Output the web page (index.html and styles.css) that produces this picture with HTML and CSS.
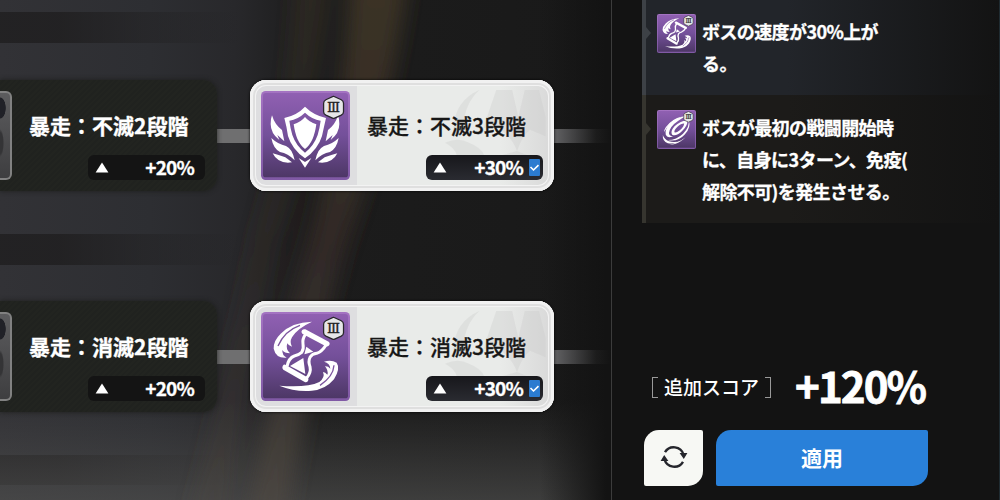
FILE: index.html
```
<!DOCTYPE html>
<html lang="ja">
<head>
    <meta charset="UTF-8">
    <meta name="viewport" content="width=device-width, initial-scale=1.0">
    <title>暴走</title>
    <link rel="stylesheet" href="styles.css">
</head>
<body>
    <svg class="defs" width="0" height="0">
        <defs>
            <linearGradient id="purple" x1="0" y1="0" x2="0" y2="1">
                <stop offset="0" stop-color="#9060b2"/>
                <stop offset="0.5" stop-color="#74509a"/>
                <stop offset="1" stop-color="#4d3766"/>
            </linearGradient>
            <linearGradient id="edge" x1="0" y1="0" x2="0" y2="1">
                <stop offset="0" stop-color="#a473c2"/>
                <stop offset="1" stop-color="#8059a5"/>
            </linearGradient>
        </defs>

        <symbol id="tile" viewBox="0 0 267 267">
            <rect width="267" height="267" rx="14" fill="url(#edge)"/>
            <rect x="6" y="6" width="255" height="253" rx="8" fill="url(#purple)"/>
        </symbol>

        <symbol id="wing" viewBox="0 0 330 330" overflow="visible">
            <path d="M66 106Q74 134 96 150L103 184L82 165L88 180Q62 160 62 132Q62 116 66 106Z"/>
            <path d="M64 174Q84 193 108 198Q127 206 134 241Q114 220 90 216Q70 206 64 174Z"/>
            <path d="M68 220Q90 226 106 232L126 247Q84 253 68 220Z"/>
        </symbol>

        <symbol id="shield" viewBox="33 33 267 267">
            <g fill="#fff">
                <path fill-rule="evenodd" d="M165 80Q190 105 228 114Q222 140 216 168Q204 208 165 235Q126 208 114 168Q110 140 103 114Q142 105 165 80ZM165 98Q144 118 118 122Q121 145 127 165Q138 197 165 218Q192 197 203 165Q209 145 212 122Q186 118 165 98Z"/>
                <path d="M165 111Q178 127 199 133Q195 160 188 176Q179 196 165 207Q151 196 142 176Q135 160 131 133Q152 127 165 111Z"/>
                <use href="#wing" width="330" height="330"/>
                <use href="#wing" width="330" height="330" transform="translate(330) scale(-1 1)"/>
                <path d="M146 234L165 246L184 234L165 263Z"/>
            </g>
        </symbol>

        <symbol id="hourglass" viewBox="33 36 267 267">
            <g fill="#fff">
                <path d="M186 65Q126 66 92 101Q70 122 71 146Q78 176 110 173Q96 166 97 150Q103 160 120 160Q106 147 112 130Q116 138 126 140Q118 126 126 112Q140 86 186 65Z"/>
                <path d="M88 257Q135 276 185 272Q225 270 252 238Q272 205 260 188Q244 178 222 185Q240 190 241 206Q234 198 225 199Q236 212 232 224Q226 216 219 216Q226 232 208 246Q170 264 88 257Z"/>
                <path d="M166 88L236 125Q242 130 236 137Q232 141 226 138L157 101Q152 97 156 91Q160 86 166 88Z"/>
                <path d="M106 194L172 232Q178 237 174 243Q170 248 164 246L100 209Q95 204 98 198Q101 193 106 194Z"/>
                <path d="M169 140L190 155L163 163Z"/>
                <path d="M160 174L166 222L120 198Z"/>
            </g>
            <!-- gaps between the strands of wind -->
            <path d="M150 76Q104 92 84 138M252 196Q250 230 210 256" fill="none" stroke="#7d559f" stroke-width="4"/>
            <path d="M168 101Q156 117 159 132Q162 147 155 157Q146 165 133 168Q116 174 111 199M228 135Q216 155 200 160Q186 162 180 172Q174 184 180 200Q184 218 170 234" fill="none" stroke="#fff" stroke-width="9" stroke-linejoin="round"/>
        </symbol>

        <symbol id="swirl" viewBox="0 0 267 267">
            <g fill="#fff">
                <path d="M222 36Q140 44 88 92Q52 130 60 170Q70 196 110 180Q84 180 82 158Q88 112 146 74Q176 50 222 36Z"/>
                <path d="M216 66Q226 112 178 162Q134 204 74 206Q140 222 190 168Q236 118 216 66Z"/>
                <path fill-rule="evenodd" d="M206 74Q160 72 120 112Q88 150 104 170Q130 184 172 144Q214 104 206 74ZM186 92Q186 112 156 138Q128 160 120 152Q114 138 140 114Q168 90 186 92Z"/>
                <path d="M40 172Q36 214 74 228Q120 236 168 212Q116 224 82 214Q50 204 40 172Z"/>
                <path d="M172 44Q100 60 60 118Q48 136 50 150Q76 90 172 44Z"/>
                <path d="M84 238Q150 234 196 186Q150 222 84 238Z"/>
            </g>
        </symbol>

        <symbol id="rank" viewBox="0 0 72 76">
            <path d="M36 3L60 14Q67 18 67 25V51Q67 58 60 62L36 73L12 62Q5 58 5 51V25Q5 18 12 14Z" fill="#e6e6e8" stroke="#29272c" stroke-width="4"/>
        </symbol>

        <symbol id="emblem" viewBox="0 0 336 336">
            <path d="M106 28Q30 60 25 150L56 142Q60 70 106 28ZM158 28L207 28L226 110L246 28H290L310 110V170L262 150Q236 172 222 216Q208 176 170 148Q142 138 118 146Q136 92 158 28ZM0 190Q40 172 74 190Q112 205 120 228H36Q30 205 0 190ZM222 216L252 228H178Z"/>
        </symbol>

        <symbol id="up" viewBox="0 0 14 11">
            <path d="M7 0.5L13.4 10.5H0.6Z"/>
        </symbol>
    </svg>

    <main class="board">
        <svg class="backdrop" viewBox="0 0 611 500">
            <defs>
                <filter id="soft" x="-50%" width="200%"><feGaussianBlur stdDeviation="10"/></filter>
                <linearGradient id="gold" x1="0" y1="0" x2="0" y2="1">
                    <stop offset="0" stop-color="#4a3e26"/>
                    <stop offset="0.5" stop-color="#3a2f2b"/>
                    <stop offset="1" stop-color="#524c44"/>
                </linearGradient>
            </defs>
            <g filter="url(#soft)" fill="url(#gold)">
                <path d="M350 -20H408Q390 110 355 220Q320 320 285 520H248Q270 380 310 235Q344 120 350 -20Z" opacity="0.7"/>
                <path d="M295 -20H330Q315 130 275 240Q245 380 225 520H190Q225 380 255 230Q290 120 295 -20Z" opacity="0.35"/>
            </g>
        </svg>

        <div class="tree">
            <div class="branch">
                <div class="card locked">
                    <div class="icon dim"></div>
                    <div class="info">
                        <div class="name">暴走：不滅2段階</div>
                        <div class="score"><svg class="up"><use href="#up"/></svg><span>+20%</span></div>
                    </div>
                </div>
                <div class="link"></div>
                <div class="card active">
                    <svg class="emblem"><use href="#emblem"/></svg>
                    <div class="icon">
                        <svg class="art"><use href="#tile"/><use href="#shield"/></svg>
                        <svg class="rank" viewBox="0 0 72 76">
                            <use href="#rank"/>
                            <text class="numeral" x="36" y="53" text-anchor="middle">Ⅲ</text>
                        </svg>
                    </div>
                    <div class="info">
                        <div class="name">暴走：不滅3段階</div>
                        <div class="score">
                            <svg class="up"><use href="#up"/></svg><span>+30%</span>
                            <svg class="check" viewBox="0 0 11 17"><path d="M1.5 8L4.5 11L9.5 6.2"/></svg>
                        </div>
                    </div>
                </div>
                <div class="link tail"></div>
            </div>

            <div class="branch">
                <div class="card locked">
                    <div class="icon dim"></div>
                    <div class="info">
                        <div class="name">暴走：消滅2段階</div>
                        <div class="score"><svg class="up"><use href="#up"/></svg><span>+20%</span></div>
                    </div>
                </div>
                <div class="link"></div>
                <div class="card active">
                    <svg class="emblem"><use href="#emblem"/></svg>
                    <div class="icon">
                        <svg class="art"><use href="#tile"/><use href="#hourglass"/></svg>
                        <svg class="rank" viewBox="0 0 72 76">
                            <use href="#rank"/>
                            <text class="numeral" x="36" y="53" text-anchor="middle">Ⅲ</text>
                        </svg>
                    </div>
                    <div class="info">
                        <div class="name">暴走：消滅3段階</div>
                        <div class="score">
                            <svg class="up"><use href="#up"/></svg><span>+30%</span>
                            <svg class="check" viewBox="0 0 11 17"><path d="M1.5 8L4.5 11L9.5 6.2"/></svg>
                        </div>
                    </div>
                </div>
                <div class="link tail"></div>
            </div>
        </div>
    </main>

    <aside class="panel">
        <div class="effects">
            <div class="effect blue">
                <div class="icon small">
                    <svg class="art"><use href="#tile"/><use href="#hourglass"/></svg>
                    <svg class="rank" viewBox="0 0 72 76">
                        <use href="#rank"/>
                        <text class="numeral" x="36" y="53" text-anchor="middle">Ⅲ</text>
                    </svg>
                </div>
                <p>ボスの速度が30%上が<br>る。</p>
            </div>
            <div class="effect olive">
                <div class="icon small">
                    <svg class="art"><use href="#tile"/><use href="#swirl"/></svg>
                    <svg class="rank" viewBox="0 0 72 76">
                        <use href="#rank"/>
                        <text class="numeral" x="36" y="53" text-anchor="middle">Ⅲ</text>
                    </svg>
                </div>
                <p>ボスが最初の戦闘開始時<br>に、自身に3ターン、免疫(<br>解除不可)を発生させる。</p>
            </div>
        </div>

        <div class="total">
            <div class="total-label">追加スコア</div>
            <div class="total-value">+120%</div>
        </div>

        <div class="actions">
            <button class="reset" type="button" aria-label="リセット">
                <svg viewBox="0 0 28 24">
                    <path class="arc" d="M5 7.2A10.2 10.2 0 0 1 23.5 9.6M23 16.8A10.2 10.2 0 0 1 4.5 14.4"/>
                    <path d="M19.6 8H27.4L23.8 14ZM8.4 16H0.6L4.2 10Z"/>
                </svg>
            </button>
            <button class="apply" type="button">適用</button>
        </div>
    </aside>
</body>
</html>
```
FILE: styles.css
```
* {
    box-sizing: border-box;
}

body {
    display: flex;
    width: 1000px;
    height: 500px;
    margin: 0;
    overflow: hidden;
    background: #131313;
    color: #fff;
    font-family: "Noto Sans CJK JP", "Noto Sans", sans-serif;
}

.defs {
    position: absolute;
}

/* left side: skill tree */
.board {
    display: grid;
    width: 611px;
    height: 500px;
    overflow: hidden;
    background:
        linear-gradient(90deg, rgba(19, 19, 19, 0) 540px, #131313 606px),
        linear-gradient(180deg, rgba(80, 80, 80, 0) 400px, rgba(80, 80, 79, 0.65) 500px),
        linear-gradient(90deg, rgba(31, 30, 31, 0.8) 60px, rgba(31, 30, 31, 0) 240px) 0 12px / 240px 31px no-repeat,
        linear-gradient(90deg, rgba(31, 30, 31, 0.8) 60px, rgba(31, 30, 31, 0) 240px) 0 234px / 240px 31px no-repeat,
        linear-gradient(90deg, rgba(31, 30, 31, 0.8) 60px, rgba(31, 30, 31, 0) 240px) 0 455px / 240px 30px no-repeat,
        linear-gradient(90deg, #323236 0, #2d2e32 150px, #28282b 235px, #1c1c1c 310px, #191919 100%);
}

.backdrop,
.tree {
    grid-area: 1 / 1;
}

.backdrop {
    width: 611px;
    height: 500px;
}

.tree {
    display: flex;
    flex-direction: column;
    gap: 110px;
    padding-top: 80px;
    z-index: 1;
}

.branch {
    display: flex;
    align-items: center;
    height: 111px;
}

.card {
    position: relative;
    display: flex;
    flex: none;
    height: 111px;
}

.locked {
    width: 217px;
    padding: 11px 12px 0 0;
    border-radius: 0 14px 14px 0;
    background: repeating-linear-gradient(135deg, #222420 0 2px, #20221f 2px 4px);
    box-shadow: 0 0 5px rgba(24, 25, 23, 0.8);
}

.active {
    width: 304px;
    padding: 11px 11px 0 11px;
    border-radius: 16px;
    background: linear-gradient(90deg, #dedee0 107px, #e9ebe9 107px, #e9ebe9 250px, #d8d8d8 100%);
    box-shadow: inset 0 0 0 3px #f1f1f1, inset 0 0 0 5px #dfdfdf, inset 0 0 0 6px #f3f3f3, 0 0 3px #000;
}

.emblem {
    position: absolute;
    top: 0;
    left: 195px;
    width: 109px;
    height: 111px;
    fill: rgba(198, 199, 200, 0.3);
}

.icon {
    position: relative;
    flex: none;
    width: 89px;
    height: 89px;
}

.art {
    display: block;
    width: 100%;
    height: 100%;
}

.rank {
    position: absolute;
    top: 4%;
    right: 6%;
    width: 26%;
    height: 28%;
}

.numeral {
    font: 42px "DejaVu Serif", serif;
    fill: #222;
    stroke: #222;
    stroke-width: 1px;
}

/* only the right edge of this tile is on screen */
.dim {
    width: 12px;
    border: 2px solid #818181;
    border-left: 0;
    border-radius: 0 6px 6px 0;
    background:
        radial-gradient(ellipse 4px 14px at 0 50px, #343436 75%, transparent),
        radial-gradient(ellipse 6px 11px at 0 15px, #202127 90%, transparent),
        linear-gradient(#5c5c5e, #3e3e40);
}

.info {
    position: relative;
    display: flex;
    flex: 1;
    flex-direction: column;
    align-items: flex-end;
}

.name {
    width: 100%;
    height: 64px;
    padding: 8px 0 0 17px;
    font-size: 21px;
    font-weight: 700;
    line-height: 52px;
    white-space: nowrap;
    -webkit-text-stroke: 0.3px;
}

.active .name {
    color: #171717;
    font-weight: 500;
}

.score {
    display: flex;
    align-items: center;
    width: 117px;
    height: 25px;
    padding: 0 11px 0 7px;
    border-radius: 6px;
    background: #141414;
    font-size: 19px;
    font-weight: 700;
    line-height: 25px;
    letter-spacing: -0.8px;
    -webkit-text-stroke: 0.3px;
}

.score span {
    margin: -2px 0 0 auto;
}

.active .score {
    padding-right: 3px;
    background: linear-gradient(#17171b, #2a2b31);
}

.up {
    width: 14px;
    height: 11px;
    fill: #fff;
}

.check {
    width: 11px;
    height: 17px;
    margin-left: 6px;
    border-radius: 1px;
    background: #2b7bd0;
    fill: none;
    stroke: #fff;
    stroke-width: 1.6;
}

.link {
    width: 33px;
    height: 14px;
    background: #6f6f70;
}

.tail {
    width: 57px;
    background: linear-gradient(90deg, #626264, rgba(40, 40, 40, 0.4) 42px, transparent);
}

/* right side: effects and total */
.panel {
    width: 389px;
    height: 500px;
    padding-left: 30px;
    border-left: 1px solid #3c3c3c;
    border-right: 1px solid #1f2b31;
    background: #131313;
}

.effects {
    height: 223px;
}

.effect {
    position: relative;
    display: flex;
    gap: 6px;
    padding: 14px 0 0 11px;
    border-left: 4px solid;
}

/* small pointer beside the icon */
.effect::before {
    content: "";
    position: absolute;
    left: 0;
    border: 6px solid transparent;
    border-left: 5px solid;
    border-left-color: inherit;
    border-right: 0;
}

.blue {
    height: 95px;
    border-color: #3d4146;
    background: linear-gradient(90deg, #22252a 40%, #131313 100%);
}

.blue::before {
    top: 27px;
}

.olive {
    height: 128px;
    padding-top: 15px;
    border-color: #36352f;
    background: linear-gradient(90deg, #1c1b19 40%, #131313 100%);
}

.olive::before {
    top: 28px;
}

.small {
    width: 39px;
    height: 39px;
}

.small .rank {
    top: 3%;
    right: 5%;
    width: 28%;
    height: 30%;
}

.effect p {
    margin: 1px 0 0;
    font-size: 18px;
    font-weight: 700;
    line-height: 32px;
    letter-spacing: -0.6px;
    white-space: nowrap;
    -webkit-text-stroke: 0.3px;
}

.total {
    display: flex;
    align-items: center;
    height: 60px;
    margin-top: 134px;
    padding-left: 10px;
}

.total-label {
    display: flex;
    align-items: center;
    gap: 6px;
    font-size: 19px;
    font-weight: 500;
    line-height: 24px;
    white-space: nowrap;
}

.total-label::before,
.total-label::after {
    content: "";
    width: 5px;
    height: 19px;
    border: 1px solid #999;
    border-right: 0;
}

.total-label::after {
    border: 1px solid #999;
    border-left: 0;
}

.total-value {
    margin: -5px 0 0 24px;
    font-size: 42px;
    font-weight: 700;
    line-height: 60px;
    letter-spacing: -1.9px;
    -webkit-text-stroke: 0.8px;
}

.actions {
    display: flex;
    gap: 13px;
    margin-top: 13px;
    padding-left: 2px;
}

button {
    height: 56px;
    padding: 0 0 2px;
    border: none;
    border-radius: 15px 2px 15px 2px;
    font-family: inherit;
    cursor: pointer;
}

.reset {
    display: flex;
    align-items: center;
    justify-content: center;
    width: 59px;
    background: #f7f8f4;
    fill: #25262c;
}

.reset svg {
    width: 28px;
    height: 24px;
}

.arc {
    fill: none;
    stroke: #25262c;
    stroke-width: 2.4;
}

.apply {
    width: 212px;
    background: #2980d9;
    color: #fff;
    font-size: 21px;
    font-weight: 700;
}
```
